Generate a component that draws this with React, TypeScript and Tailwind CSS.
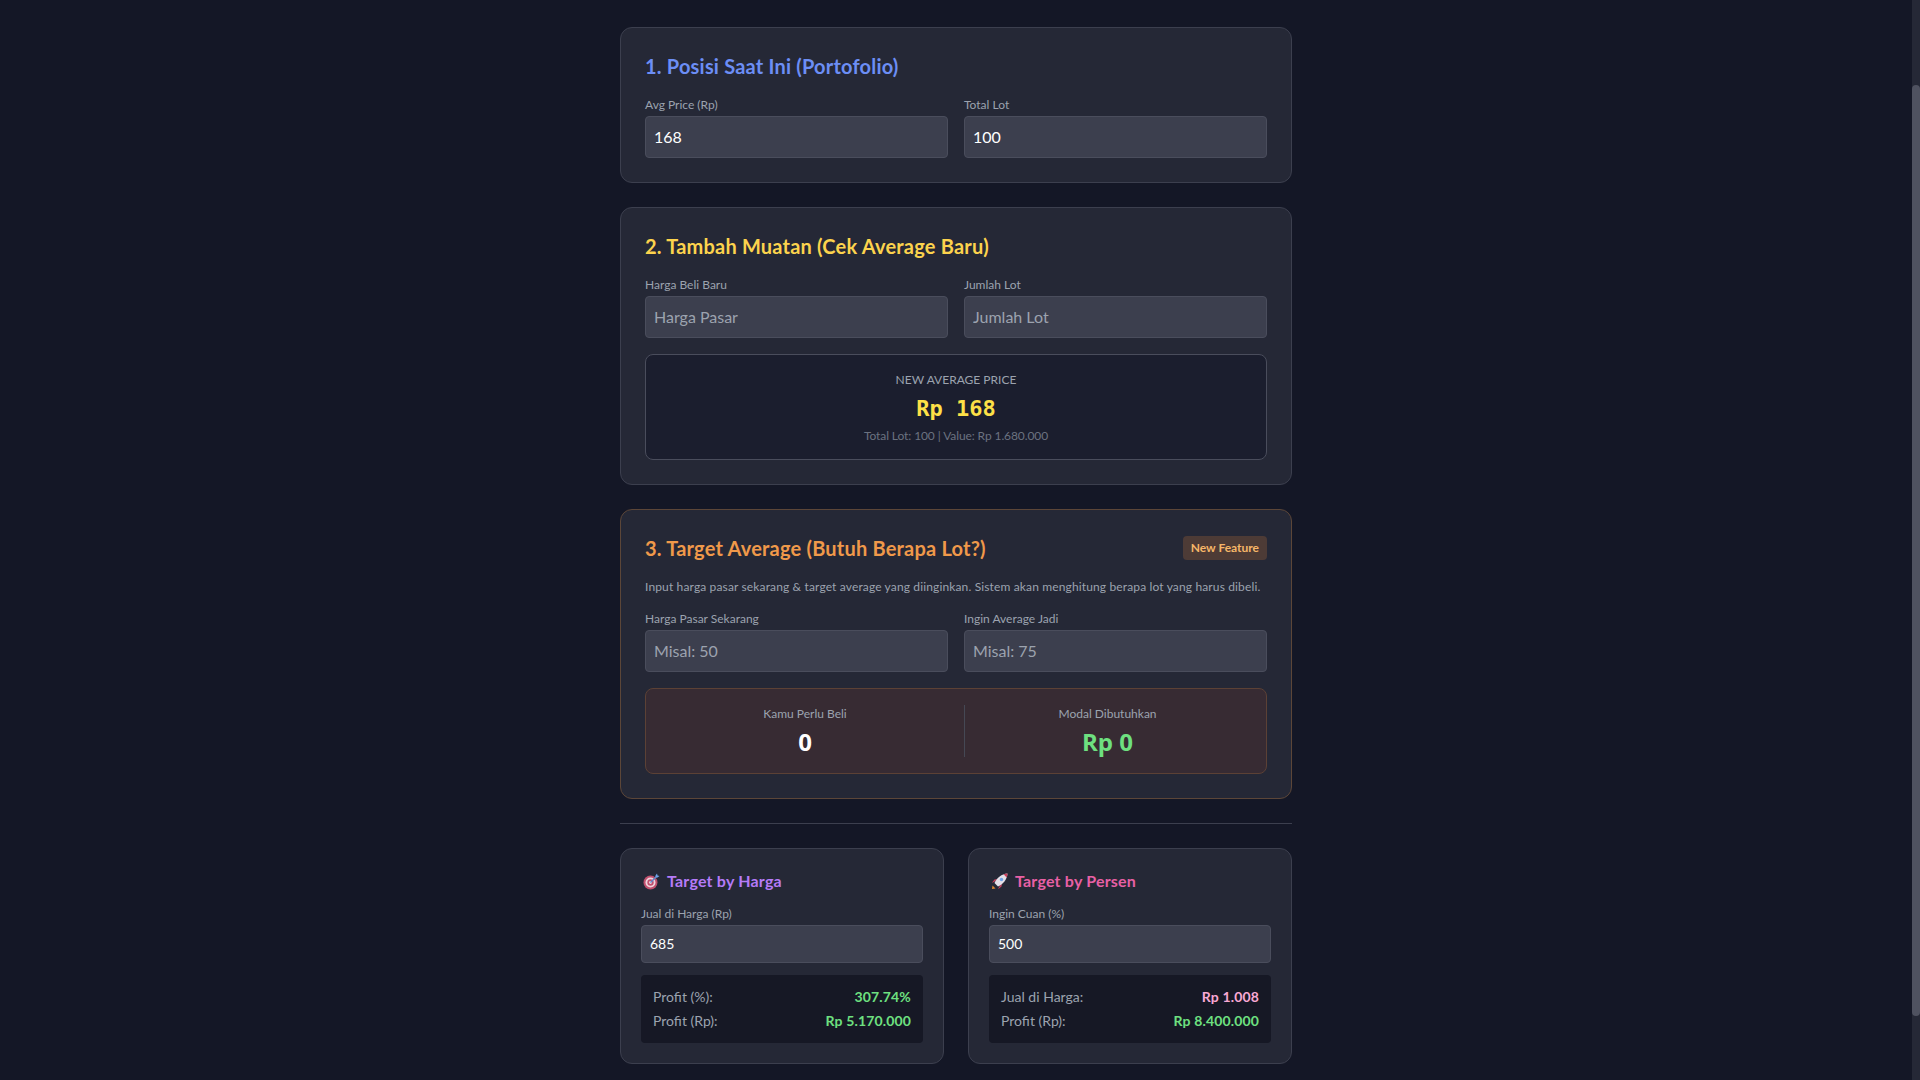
const font = { fontFamily: 'Lato, "Open Sans", sans-serif' };

function Field({ label, value, placeholder }: { label: string; value?: string; placeholder?: string }) {
  return (
    <div>
      <label className="block pt-px text-xs leading-4 text-[#9ca3af] mb-[3px]">{label}</label>
      <input
        readOnly
        value={value}
        placeholder={placeholder}
        className="w-full rounded bg-[#3c3f4e] border border-[#4a4d5c] px-2 py-2 text-base leading-6 text-white placeholder:text-[#9ca3af] outline-none"
      />
    </div>
  );
}

function SmallField({ label, value }: { label: string; value: string }) {
  return (
    <div>
      <label className="block pt-px text-xs leading-4 text-[#9ca3af] mb-[3px]">{label}</label>
      <input
        readOnly
        value={value}
        className="w-full rounded bg-[#3c3f4e] border border-[#4a4d5c] px-2 py-2 text-sm leading-5 text-white outline-none"
      />
    </div>
  );
}

function Row({ label, value, color }: { label: string; value: string; color: string }) {
  return (
    <div className="flex justify-between text-sm leading-5">
      <span className="text-[#9ca3af]">{label}</span>
      <span className={`font-bold tracking-[0.15px] ${color}`}>{value}</span>
    </div>
  );
}

function TargetIcon() {
  return (
    <svg width="17" height="17" viewBox="0 0 17 17" className="shrink-0 ml-0.5">
      <circle cx="7.5" cy="9.5" r="7" fill="#c0506e" />
      <circle cx="7.5" cy="9.5" r="5" fill="#f0d4dc" />
      <circle cx="7.5" cy="9.5" r="3.2" fill="#c0506e" />
      <circle cx="7.5" cy="9.5" r="1.4" fill="#f0d4dc" />
      <path d="M7.5 9.5 L14 3" stroke="#5b86c9" strokeWidth="1.4" />
      <path d="M12.5 2.5 L14 0.5 L14.5 2.5 L16.5 3 L14.5 4.5 L12.5 4.5 Z" fill="#6fa3e8" />
    </svg>
  );
}

function RocketIcon() {
  return (
    <svg width="17" height="17" viewBox="0 0 17 17" className="shrink-0 ml-0.5">
      <path d="M1 16 L1.5 12.5 L4.5 15.5 Z" fill="#e0892f" />
      <path d="M3 9 L0.8 9.8 L3.5 6.5 L6.5 6 Z" fill="#c9405c" />
      <path d="M8 14 L7.2 16.2 L10.5 13.5 L11 10.5 Z" fill="#c9405c" />
      <path d="M3.5 10 C6 4.5 10.5 1 16.5 0.5 C16 6.5 12.5 11 7 13.5 Z" fill="#e3dfe8" />
      <path d="M12.5 1.2 C14 0.8 15.5 0.6 16.5 0.5 C16.4 1.8 16.1 3.2 15.7 4.5 Z" fill="#c9405c" />
      <circle cx="10.5" cy="6.5" r="1.7" fill="#6fa3e8" />
    </svg>
  );
}

export default function App() {
  return (
    <div className="flex h-screen overflow-hidden bg-[#141726]" style={font}>
      <main className="flex-1 pt-[27px]">
        <div className="mx-auto w-[672px] space-y-6">
          <section className="rounded-xl bg-[#252836] border border-[#3c3f4e] p-6">
            <h2 className="text-xl leading-7 font-bold tracking-[0.2px] text-[#6c8ef5] mb-4">1. Posisi Saat Ini (Portofolio)</h2>
            <div className="grid grid-cols-2 gap-4">
              <Field label="Avg Price (Rp)" value="168" />
              <Field label="Total Lot" value="100" />
            </div>
          </section>

          <section className="rounded-xl bg-[#252836] border border-[#3c3f4e] p-6">
            <h2 className="text-xl leading-7 font-bold tracking-[0.2px] text-[#fcd34d] mb-4">2. Tambah Muatan (Cek Average Baru)</h2>
            <div className="grid grid-cols-2 gap-4">
              <Field label="Harga Beli Baru" placeholder="Harga Pasar" />
              <Field label="Jumlah Lot" placeholder="Jumlah Lot" />
            </div>
            <div className="mt-4 rounded-lg bg-[#1b1e2e] border border-[#4a4d5c] p-4 pb-[15px] text-center">
              <div className="pt-px text-xs leading-4 uppercase text-[#9ca3af]">New Average Price</div>
              <div className="mt-[5px] text-[22px] leading-8 font-bold text-[#fde047] font-['DejaVu_Sans_Mono',monospace]">Rp 168</div>
              <div className="mt-[3px] text-xs leading-4 tracking-[-0.1px] text-[#6b7280]">Total Lot: 100 | Value: Rp 1.680.000</div>
            </div>
          </section>

          <section className="rounded-xl bg-[#252836] border border-[#5c4638] p-6">
            <div className="flex items-center justify-between mb-4">
              <h2 className="text-xl leading-7 font-bold tracking-[0.2px] text-[#f0994a]">3. Target Average (Butuh Berapa Lot?)</h2>
              <span className="rounded bg-[#4d3b36] px-2 py-1 text-xs leading-4 font-bold text-[#f6b668]">New Feature</span>
            </div>
            <p className="pt-px text-xs leading-4 tracking-[0.14px] text-[#9ca3af] mb-[15px]">
              Input harga pasar sekarang &amp; target average yang diinginkan. Sistem akan menghitung berapa lot yang harus dibeli.
            </p>
            <div className="grid grid-cols-2 gap-4">
              <Field label="Harga Pasar Sekarang" placeholder="Misal: 50" />
              <Field label="Ingin Average Jadi" placeholder="Misal: 75" />
            </div>
            <div className="mt-4 grid grid-cols-2 gap-4 rounded-lg bg-[#372b33] border border-[#5c4135] p-4 text-center">
              <div>
                <div className="pt-px text-xs leading-4 text-[#9ca3af]">Kamu Perlu Beli</div>
                <div className="mt-1 text-2xl leading-[31px] font-bold text-white font-['Open_Sans',sans-serif]">0</div>
              </div>
              <div className="border-l border-[#454854]">
                <div className="pt-px text-xs leading-4 text-[#9ca3af]">Modal Dibutuhkan</div>
                <div className="mt-1 text-2xl leading-[31px] font-bold text-[#6ee080] font-['Open_Sans',sans-serif]">Rp 0</div>
              </div>
            </div>
          </section>

          <hr className="border-[#3c3f4e]" />

          <div className="grid grid-cols-2 gap-6">
            <section className="rounded-xl bg-[#252836] border border-[#3c3f4e] p-5">
              <h3 className="flex items-center gap-[7px] text-base leading-6 font-bold tracking-[0.2px] text-[#b57bf8] mb-3">
                <TargetIcon />
                Target by Harga
              </h3>
              <SmallField label="Jual di Harga (Rp)" value="685" />
              <div className="mt-3 rounded bg-[#161825] p-3 space-y-1">
                <Row label="Profit (%):" value="307.74%" color="text-[#6ee080]" />
                <Row label="Profit (Rp):" value="Rp 5.170.000" color="text-[#6ee080]" />
              </div>
            </section>

            <section className="rounded-xl bg-[#252836] border border-[#3c3f4e] p-5">
              <h3 className="flex items-center gap-[7px] text-base leading-6 font-bold tracking-[0.2px] text-[#e860a5] mb-3">
                <RocketIcon />
                Target by Persen
              </h3>
              <SmallField label="Ingin Cuan (%)" value="500" />
              <div className="mt-3 rounded bg-[#161825] p-3 space-y-1">
                <Row label="Jual di Harga:" value="Rp 1.008" color="text-[#f9a8d4]" />
                <Row label="Profit (Rp):" value="Rp 8.400.000" color="text-[#6ee080]" />
              </div>
            </section>
          </div>
        </div>
      </main>

      <aside className="w-2 shrink-0 bg-[#252836] pt-[85px]">
        <div className="h-[931px] rounded bg-[#4f5260]" />
      </aside>
    </div>
  );
}
